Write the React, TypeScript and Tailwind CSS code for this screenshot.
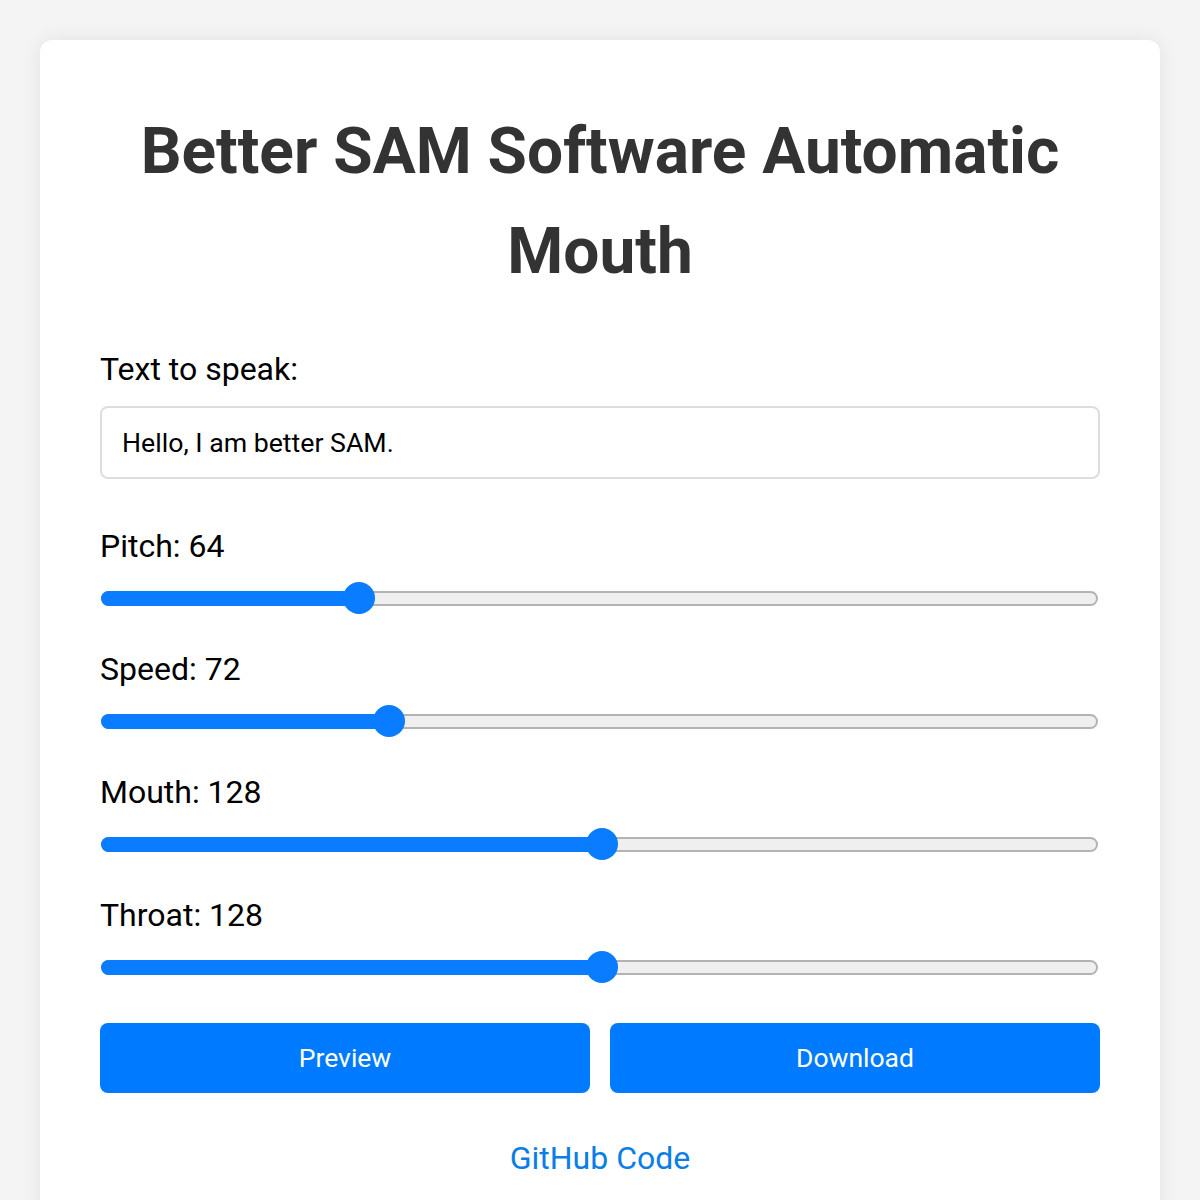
import { useState } from 'react';

interface SliderDef {
  key: string;
  label: string;
  value: number;
}

const initialSliders: SliderDef[] = [
  { key: 'pitch', label: 'Pitch', value: 64 },
  { key: 'speed', label: 'Speed', value: 72 },
  { key: 'mouth', label: 'Mouth', value: 128 },
  { key: 'throat', label: 'Throat', value: 128 },
];

const MAX = 255;

export default function App() {
  const [text, setText] = useState('Hello, I am better SAM.');
  const [sliders, setSliders] = useState(initialSliders);

  const update = (key: string, value: number) =>
    setSliders((s) => s.map((x) => (x.key === key ? { ...x, value } : x)));

  return (
    <div className="min-h-[1200px] bg-[#f4f4f4] px-10 pt-10 font-['Roboto','Liberation_Sans',sans-serif]">
      <main className="mx-auto rounded-[12px] bg-white px-[60px] pt-[62px] pb-10 shadow-[0_0_20px_rgba(0,0,0,0.08)]">
        <h1 className="text-center text-[64px] leading-[100px] font-bold text-[#333]">
          Better SAM Software Automatic Mouth
        </h1>

        <label htmlFor="sam-text" className="mt-[43px] block text-[32px] leading-[48px] text-black">
          Text to speak:
        </label>
        <input
          id="sam-text"
          type="text"
          value={text}
          onChange={(e) => setText(e.target.value)}
          className="mt-[13px] block h-[73px] w-full rounded-[8px] border-2 border-[#ddd] px-5 text-[26.7px] text-black outline-none"
        />

        <div className="mt-[43px] flex flex-col gap-[31px]">
          {sliders.map((s) => (
            <RangeField key={s.key} label={s.label} value={s.value} onChange={(v) => update(s.key, v)} />
          ))}
        </div>

        <div className="mt-[40px] grid grid-cols-2 gap-5">
          <button
            type="button"
            className="h-[70px] rounded-[8px] bg-[#007bff] text-[26.5px] text-white"
          >
            Preview
          </button>
          <button
            type="button"
            className="h-[70px] rounded-[8px] bg-[#007bff] text-[26.5px] text-white"
          >
            Download
          </button>
        </div>

        <p className="mt-[41px] text-center text-[32px] leading-[48px]">
          <a href="#" className="text-[#0a7ee6]">
            GitHub Code
          </a>
        </p>
      </main>
    </div>
  );
}

function RangeField({
  label,
  value,
  onChange,
}: Readonly<{ label: string; value: number; onChange: (v: number) => void }>) {
  const frac = value / MAX;
  // thumb travels inside the track, 16px in from each end
  const center = `calc(16px + (100% - 32px) * ${frac})`;
  return (
    <div>
      <div className="text-[32px] leading-[48px] text-black">
        {label}: {value}
      </div>
      <div className="relative mt-3 h-8">
        <div className="absolute top-[9px] right-[2px] left-px h-[15px] rounded-full border-2 border-[#b3b3b3] bg-[#efefef]" />
        <div
          className="absolute top-[9px] left-px h-[15px] rounded-full bg-[#0a7cff]"
          style={{ width: center }}
        />
        <div
          className="absolute top-0 h-8 w-8 -translate-x-1/2 rounded-full bg-[#0a7cff]"
          style={{ left: center }}
        />
        <input
          type="range"
          min={0}
          max={MAX}
          value={value}
          onChange={(e) => onChange(Number(e.target.value))}
          className="absolute inset-0 h-full w-full cursor-pointer opacity-0"
          aria-label={label}
        />
      </div>
    </div>
  );
}
